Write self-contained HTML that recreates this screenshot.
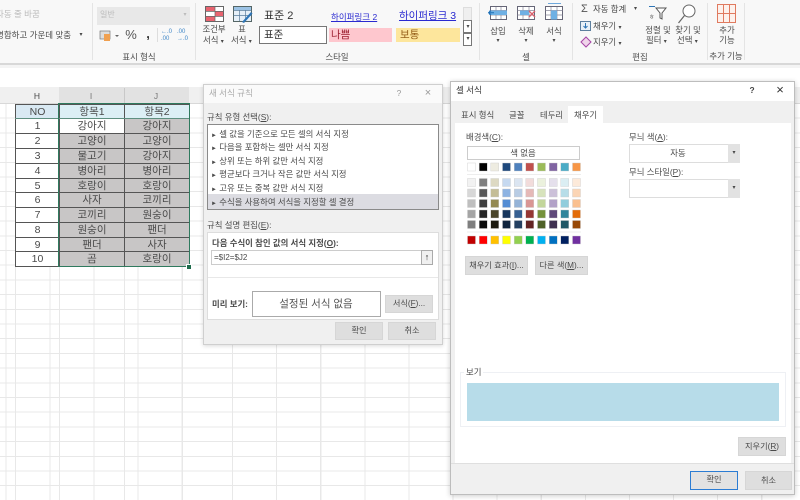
<!DOCTYPE html>
<html lang="ko"><head><meta charset="utf-8"><title>셀 서식</title>
<style>
html,body{margin:0;padding:0;width:800px;height:500px;overflow:hidden;background:#fff}
#w{position:absolute;left:0;top:0;width:800px;height:500px;overflow:hidden;filter:blur(.35px);font-family:"Liberation Sans","Noto Sans CJK KR",sans-serif;font-size:8.4px;color:#4a4a4a}
.a,.t{position:absolute}
.t{white-space:nowrap;line-height:12px;transform:translateY(-6px)}
.c{transform:translate(-50%,-6px)}
.m{font-size:6px}
.btn{position:absolute;background:#dedede;border:1px solid #d6d6d6;box-sizing:border-box;text-align:center;font-size:8.2px;color:#4a4a4a;white-space:nowrap}
u{text-decoration:underline}
table{position:absolute;left:15px;top:104px;border-collapse:collapse;table-layout:fixed;width:174px;font-size:10.5px;color:#4a4a4a}
td{padding:0;text-align:center;border:1px solid #555;line-height:12px;background:#c8c6c6;overflow:hidden}
td:first-child{background:#fff}
tr:first-child td{background:#dceff5;border-bottom:1px solid #5f8f80}
tr:first-child td:first-child{background:#d9e9f3}
</style></head><body><div id="w">

<!-- grid -->
<div class="a" style="left:0;top:104px;width:800px;height:396px;background-image:repeating-linear-gradient(180deg,transparent 0,transparent 13.7px,#e8e8e8 13.7px,#e8e8e8 14.7px),repeating-linear-gradient(90deg,transparent 0,transparent 43px,#e8e8e8 43px,#e8e8e8 44.1px);background-position:0 0,189px 0"></div>
<div class="a" style="left:15px;top:266px;width:1px;height:234px;background:#e8e8e8"></div>
<div class="a" style="left:59px;top:266px;width:1px;height:234px;background:#e8e8e8"></div>
<div class="a" style="left:124px;top:266px;width:1px;height:234px;background:#e8e8e8"></div>

<!-- column headers -->
<div class="a" style="left:0;top:87px;width:800px;height:17px;background:#f0f0f0;border-bottom:1px solid #d8d8d8;box-sizing:border-box"></div>
<div class="a" style="left:59px;top:87px;width:130px;height:17px;background:#e2e2e2;border-bottom:1px solid #b8c8c0;box-sizing:border-box"></div>
<div class="a" style="left:124px;top:88px;width:1px;height:15px;background:#c8c8c8"></div>
<span class="t c" style="left:37px;top:96px;font-size:8.5px">H</span>
<span class="t c" style="left:91px;top:96px;font-size:8.5px;color:#777">I</span>
<span class="t c" style="left:156px;top:96px;font-size:8.5px;color:#777">J</span>

<table>
<colgroup><col style="width:44px"><col style="width:65px"><col style="width:65px"></colgroup>
<tr style="height:14px"><td>NO</td><td>항목1</td><td>항목2</td></tr>
<tr style="height:15px"><td>1</td><td style="background:#fff">강아지</td><td>강아지</td></tr>
<tr style="height:15px"><td>2</td><td>고양이</td><td>고양이</td></tr>
<tr style="height:15px"><td>3</td><td>물고기</td><td>강아지</td></tr>
<tr style="height:15px"><td>4</td><td>병아리</td><td>병아리</td></tr>
<tr style="height:14px"><td>5</td><td>호랑이</td><td>호랑이</td></tr>
<tr style="height:15px"><td>6</td><td>사자</td><td>코끼리</td></tr>
<tr style="height:15px"><td>7</td><td>코끼리</td><td>원숭이</td></tr>
<tr style="height:15px"><td>8</td><td>원숭이</td><td>팬더</td></tr>
<tr style="height:14px"><td>9</td><td>팬더</td><td>사자</td></tr>
<tr style="height:15px"><td>10</td><td>곰</td><td>호랑이</td></tr>
</table>
<div class="a" style="left:58px;top:103px;width:132px;height:164px;border:1.5px solid #2f7a5e;box-sizing:border-box"></div>
<div class="a" style="left:186px;top:264px;width:4px;height:4px;background:#1f6b4c;border:1px solid #fff"></div>

<!-- ribbon -->
<div class="a" style="left:0;top:0;width:800px;height:65px;background:#f8f8f8;border-bottom:2px solid #d8d8d8;box-sizing:border-box"></div>
<div class="a" style="left:0;top:65px;width:800px;height:3px;background:#f4f4f4"></div>
<div class="a" style="left:92px;top:3px;width:1px;height:57px;background:#e4e4e4"></div>
<div class="a" style="left:195px;top:3px;width:1px;height:57px;background:#e4e4e4"></div>
<div class="a" style="left:479px;top:3px;width:1px;height:57px;background:#e4e4e4"></div>
<div class="a" style="left:572px;top:3px;width:1px;height:57px;background:#e4e4e4"></div>
<div class="a" style="left:707px;top:3px;width:1px;height:57px;background:#e4e4e4"></div>
<div class="a" style="left:744px;top:3px;width:1px;height:57px;background:#e4e4e4"></div>

<span class="t" style="left:-4px;top:14px;color:#bbb;font-size:8.5px">자동 줄 바꿈</span>
<span class="t" style="left:-4px;top:35px;font-size:8.5px">병합하고 가운데 맞춤</span>
<span class="t c m" style="left:81px;top:35px">▾</span>
<div class="a" style="left:97px;top:7px;width:93px;height:18px;background:#e8e8e8"></div>
<span class="t" style="left:100px;top:15px;color:#bbb;font-size:8px">일반</span>
<span class="t c m" style="left:185px;top:15px;color:#bbb">▾</span>
<svg class="a" style="left:99px;top:29px" width="95" height="13" viewBox="0 0 95 13"><rect x="1" y="2" width="10" height="8" fill="#ddd" stroke="#777" stroke-width=".7"/><rect x="5" y="5" width="6" height="7" fill="#f0a050"/><path d="M16 6l2 2 2-2z" fill="#666"/></svg>
<span class="t c" style="left:131px;top:35px;font-size:13px;color:#555">%</span>
<span class="t c" style="left:148px;top:34px;font-size:13px;font-weight:bold;color:#333">,</span>
<div class="a" style="left:157px;top:28px;width:1px;height:14px;background:#ddd"></div>
<span class="t" style="left:161px;top:35px;font-size:6px;color:#3d85c6;line-height:7px;width:12px">←.0<br>.00</span>
<span class="t" style="left:177px;top:35px;font-size:6px;color:#3d85c6;line-height:7px;width:12px">.00<br>→.0</span>
<span class="t c" style="left:139px;top:57px">표시 형식</span>

<svg class="a" style="left:205px;top:6px" width="19" height="16" viewBox="0 0 19 16"><rect x=".5" y=".5" width="18" height="15" fill="#fff" stroke="#666"/><rect x="1" y="1" width="9" height="4" fill="#e8636f"/><rect x="10" y="5" width="8" height="5" fill="#e8636f"/><rect x="1" y="10" width="9" height="5" fill="#e8636f"/><path d="M10 1v14M1 5.500h17M1 10.500h17" stroke="#666" stroke-width=".7"/></svg>
<span class="t c" style="left:214px;top:29px">조건부</span>
<span class="t" style="left:203px;top:40px">서식 <span class="m">▾</span></span>
<svg class="a" style="left:233px;top:6px" width="20" height="18" viewBox="0 0 20 18"><rect x=".5" y=".5" width="18" height="15" fill="#e6f0f8" stroke="#566"/><path d="M.5 4.500h18M.5 9.500h18M6.500 1v14M12.500 1v14" stroke="#5a7d9c" stroke-width=".7"/><rect x="1" y="1" width="17" height="3" fill="#9cc3e5"/><path d="M9 16L18 6l1.500 1.500L11 17z" fill="#2e75b6"/></svg>
<span class="t c" style="left:242px;top:29px">표</span>
<span class="t" style="left:231px;top:40px">서식 <span class="m">▾</span></span>

<span class="t" style="left:264px;top:16px;font-size:11px;color:#333">표준 2</span>
<div class="a" style="left:259px;top:26px;width:68px;height:18px;background:#fff;border:1px solid #777;box-sizing:border-box"></div>
<span class="t" style="left:264px;top:35px;font-size:10.5px;color:#333">표준</span>
<span class="t" style="left:331px;top:17px;font-size:8.5px;color:#2a2ad0;text-decoration:underline">하이퍼링크 2</span>
<div class="a" style="left:329px;top:28px;width:63px;height:14px;background:#fec7ce"></div>
<span class="t" style="left:331px;top:35px;font-size:10.5px;color:#9c2030">나쁨</span>
<span class="t" style="left:399px;top:16px;font-size:10.5px;color:#2a2ad0;text-decoration:underline">하이퍼링크 3</span>
<div class="a" style="left:396px;top:28px;width:64px;height:14px;background:#fde69c"></div>
<span class="t" style="left:400px;top:35px;font-size:10.5px;color:#96601a">보통</span>
<div class="a" style="left:463px;top:7px;width:9px;height:14px;background:#efefef;border:1px solid #ddd;box-sizing:border-box"></div>
<div class="a" style="left:463px;top:20px;width:9px;height:13px;background:#fff;border:1px solid #777;box-sizing:border-box"></div>
<div class="a" style="left:463px;top:33px;width:9px;height:13px;background:#fff;border:1px solid #777;box-sizing:border-box"></div>
<span class="t c m" style="left:468px;top:27px">▾</span>
<span class="t c m" style="left:468px;top:39px">▾</span>
<span class="t c" style="left:337px;top:57px">스타일</span>

<svg class="a" style="left:488px;top:5px" width="20" height="16" viewBox="0 0 20 16"><rect x="2.500" y="1.500" width="16" height="13" fill="#fff" stroke="#667"/><path d="M2.500 5.500h16M2.500 10h16M8 2v12M13 2v12" stroke="#889" stroke-width=".7"/><rect x="1" y="5.500" width="18" height="4.500" fill="#6fb0e4"/><path d="M6 7.700H1M3 5.700l-2.500 2 2.500 2" stroke="#1f6fb5" fill="none"/></svg>
<span class="t c" style="left:498px;top:31px">삽입</span>
<span class="t c m" style="left:498px;top:41px">▾</span>
<svg class="a" style="left:517px;top:5px" width="20" height="16" viewBox="0 0 20 16"><rect x=".5" y="1.500" width="17" height="13" fill="#fff" stroke="#667"/><path d="M.5 5.500h17M.5 10h17M6 2v12M12 2v12" stroke="#889" stroke-width=".7"/><rect x="3" y="5.500" width="9" height="4.500" fill="#6fb0e4"/><path d="M12 6l6 6M18 6l-6 6" stroke="#d9606c" stroke-width="1.300"/></svg>
<span class="t c" style="left:526px;top:31px">삭제</span>
<span class="t c m" style="left:526px;top:41px">▾</span>
<svg class="a" style="left:545px;top:3px" width="19" height="18" viewBox="0 0 19 18"><path d="M3 .500h13" stroke="#6fa8dc"/><rect x=".5" y="3.500" width="17" height="13" fill="#fff" stroke="#667"/><path d="M.5 7.500h17M.5 12h17M6 4v12M12 4v12" stroke="#889" stroke-width=".7"/><rect x="6" y="7.500" width="6" height="9" fill="#6fb0e4"/></svg>
<span class="t c" style="left:554px;top:31px">서식</span>
<span class="t c m" style="left:554px;top:41px">▾</span>
<span class="t c" style="left:526px;top:57px">셀</span>

<span class="t" style="left:581px;top:9px;font-size:11px;color:#555">Σ</span>
<span class="t" style="left:593px;top:9px">자동 합계</span>
<span class="t m" style="left:634px;top:9px">▾</span>
<svg class="a" style="left:580px;top:20px" width="12" height="12" viewBox="0 0 12 12"><rect x=".5" y="1.500" width="10" height="9" fill="#e8f1f8" stroke="#5d7f9e"/><path d="M5.500 3v5M3.500 6l2 2 2-2" stroke="#2e75b6" fill="none"/></svg>
<span class="t" style="left:593px;top:26px">채우기 <span class="m">▾</span></span>
<svg class="a" style="left:580px;top:36px" width="12" height="12" viewBox="0 0 12 12"><path d="M1 6l5-5 5 5-5 5z" fill="#f0d5ea" stroke="#a646a6"/></svg>
<span class="t" style="left:593px;top:42px">지우기 <span class="m">▾</span></span>
<svg class="a" style="left:648px;top:5px" width="20" height="17" viewBox="0 0 20 17"><path d="M1 1.500h6" stroke="#2e75b6"/><path d="M8 3h10l-4 5v6l-2-1V8z" fill="#fff" stroke="#555"/></svg>
<span class="t m" style="left:649px;top:18px">ㅎ</span>
<span class="t c" style="left:658px;top:30px">정렬 및</span>
<span class="t" style="left:646px;top:40px">필터 <span class="m">▾</span></span>
<svg class="a" style="left:677px;top:3px" width="21" height="21" viewBox="0 0 21 21"><circle cx="12" cy="8" r="6" fill="#fff" stroke="#666"/><path d="M7.500 12.500L1.500 20" stroke="#666" stroke-width="1.200"/></svg>
<span class="t c" style="left:688px;top:30px">찾기 및</span>
<span class="t" style="left:677px;top:40px">선택 <span class="m">▾</span></span>
<span class="t c" style="left:640px;top:57px">편집</span>
<svg class="a" style="left:717px;top:4px" width="19" height="19" viewBox="0 0 19 19"><rect x=".5" y=".5" width="18" height="18" fill="#fdf1ec" stroke="#e07a5f"/><path d="M6.500 1v17M12.500 1v17M1 9.500h17" stroke="#e07a5f"/></svg>
<span class="t c" style="left:727px;top:30px">추가</span>
<span class="t c" style="left:727px;top:40px">기능</span>
<span class="t c" style="left:726px;top:56px">추가 기능</span>

<!-- Dialog 1 -->
<div class="a" style="left:203px;top:84px;width:240px;height:261px;background:#f0f0f0;border:1px solid #cfcfcf;box-sizing:border-box;box-shadow:0 1px 4px rgba(0,0,0,.15)"></div>
<div class="a" style="left:204px;top:85px;width:238px;height:18px;background:#fafafa"></div>
<span class="t" style="left:209px;top:93px;color:#aaa;font-size:8.5px">새 서식 규칙</span>
<span class="t c" style="left:399px;top:93px;color:#999">?</span>
<span class="t c" style="left:428px;top:93px;color:#999;font-size:11px">×</span>
<span class="t" style="left:207px;top:117px">규칙 유형 선택(<u>S</u>):</span>
<div class="a" style="left:207px;top:124px;width:232px;height:86px;background:#fff;border:1px solid #8a8a8a;box-sizing:border-box"></div>
<div class="a" style="left:208px;top:194px;width:230px;height:15px;background:#dcdce2"></div>
<span class="t" style="left:211px;top:134px"><span class="m">►</span> 셀 값을 기준으로 모든 셀의 서식 지정</span>
<span class="t" style="left:211px;top:147px"><span class="m">►</span> 다음을 포함하는 셀만 서식 지정</span>
<span class="t" style="left:211px;top:161px"><span class="m">►</span> 상위 또는 하위 값만 서식 지정</span>
<span class="t" style="left:211px;top:174px"><span class="m">►</span> 평균보다 크거나 작은 값만 서식 지정</span>
<span class="t" style="left:211px;top:188px"><span class="m">►</span> 고유 또는 중복 값만 서식 지정</span>
<span class="t" style="left:211px;top:202px"><span class="m">►</span> 수식을 사용하여 서식을 지정할 셀 결정</span>
<span class="t" style="left:207px;top:225px">규칙 설명 편집(<u>E</u>):</span>
<div class="a" style="left:207px;top:232px;width:232px;height:88px;background:#fff;border:1px solid #ddd;box-sizing:border-box"></div>
<span class="t" style="left:212px;top:243px;font-weight:bold">다음 수식이 참인 값의 서식 지정(<u>O</u>):</span>
<div class="a" style="left:211px;top:250px;width:222px;height:15px;background:#fff;border:1px solid #ccc;box-sizing:border-box"></div>
<span class="t" style="left:214px;top:258px;font-size:8px">=$I2=$J2</span>
<div class="a" style="left:421px;top:250px;width:12px;height:15px;background:#f0f0f0;border:1px solid #aaa;box-sizing:border-box"></div>
<span class="t c" style="left:427px;top:257px;font-size:9px;color:#222;font-weight:bold">↑</span>
<div class="a" style="left:208px;top:277px;width:230px;height:1px;background:#e8e8e8"></div>
<span class="t" style="left:212px;top:304px;font-weight:bold">미리 보기:</span>
<div class="a" style="left:252px;top:291px;width:129px;height:26px;background:#fff;border:1px solid #aaa;box-sizing:border-box"></div>
<span class="t c" style="left:316px;top:304px;font-size:10.5px;color:#555">설정된 서식 없음</span>
<div class="btn" style="left:385px;top:295px;width:48px;height:18px;line-height:16px">서식(<u>F</u>)...</div>
<div class="btn" style="left:335px;top:322px;width:48px;height:18px;line-height:16px">확인</div>
<div class="btn" style="left:388px;top:322px;width:48px;height:18px;line-height:16px">취소</div>

<!-- Dialog 2 -->
<div class="a" style="left:450px;top:81px;width:345px;height:414px;background:#f0f0f0;border:1px solid #bdbdbd;box-sizing:border-box;box-shadow:0 1px 5px rgba(0,0,0,.2)"></div>
<div class="a" style="left:451px;top:82px;width:343px;height:19px;background:#fff"></div>
<span class="t" style="left:456px;top:90px;font-size:8.5px;color:#333">셀 서식</span>
<span class="t c" style="left:752px;top:90px;font-weight:bold;color:#444">?</span>
<span class="t c" style="left:780px;top:90px;font-size:13px;color:#333">×</span>
<span class="t" style="left:461px;top:115px">표시 형식</span>
<span class="t" style="left:509px;top:115px">글꼴</span>
<span class="t" style="left:540px;top:115px">테두리</span>
<div class="a" style="left:455px;top:123px;width:336px;height:340px;background:#fff"></div>
<div class="a" style="left:568px;top:106px;width:35px;height:18px;background:#fff"></div>
<span class="t" style="left:574px;top:115px">채우기</span>
<span class="t" style="left:466px;top:137px">배경색(<u>C</u>):</span>
<div class="a" style="left:467px;top:146px;width:113px;height:14px;background:#fff;border:1px solid #ccc;box-sizing:border-box"></div>
<span class="t c" style="left:523px;top:153px">색 없음</span>
<svg class="a" style="left:467px;top:162px" width="120" height="84" viewBox="467 162 120 84">
<g stroke="#ccc" stroke-width=".4">
<rect x="467.500" y="163" width="8" height="8" fill="#fff"/><rect x="479.200" y="163" width="8" height="8" fill="#000"/><rect x="490.800" y="163" width="8" height="8" fill="#eeece1"/><rect x="502.500" y="163" width="8" height="8" fill="#1f497d"/><rect x="514.200" y="163" width="8" height="8" fill="#4f81bd"/><rect x="525.800" y="163" width="8" height="8" fill="#c0504d"/><rect x="537.500" y="163" width="8" height="8" fill="#9bbb59"/><rect x="549.200" y="163" width="8" height="8" fill="#8064a2"/><rect x="560.800" y="163" width="8" height="8" fill="#4bacc6"/><rect x="572.500" y="163" width="8" height="8" fill="#f79646"/>
<rect x="467.500" y="178.500" width="8" height="8" fill="#f2f2f2"/><rect x="479.200" y="178.500" width="8" height="8" fill="#7f7f7f"/><rect x="490.800" y="178.500" width="8" height="8" fill="#ddd9c3"/><rect x="502.500" y="178.500" width="8" height="8" fill="#c6d9f0"/><rect x="514.200" y="178.500" width="8" height="8" fill="#dbe5f1"/><rect x="525.800" y="178.500" width="8" height="8" fill="#f2dcdb"/><rect x="537.500" y="178.500" width="8" height="8" fill="#ebf1dd"/><rect x="549.200" y="178.500" width="8" height="8" fill="#e5e0ec"/><rect x="560.800" y="178.500" width="8" height="8" fill="#dbeef3"/><rect x="572.500" y="178.500" width="8" height="8" fill="#fdeada"/>
<rect x="467.500" y="189" width="8" height="8" fill="#d8d8d8"/><rect x="479.200" y="189" width="8" height="8" fill="#595959"/><rect x="490.800" y="189" width="8" height="8" fill="#c4bd97"/><rect x="502.500" y="189" width="8" height="8" fill="#8db3e2"/><rect x="514.200" y="189" width="8" height="8" fill="#b8cce4"/><rect x="525.800" y="189" width="8" height="8" fill="#e5b9b7"/><rect x="537.500" y="189" width="8" height="8" fill="#d7e3bc"/><rect x="549.200" y="189" width="8" height="8" fill="#ccc1d9"/><rect x="560.800" y="189" width="8" height="8" fill="#b7dde8"/><rect x="572.500" y="189" width="8" height="8" fill="#fbd5b5"/>
<rect x="467.500" y="199.500" width="8" height="8" fill="#bfbfbf"/><rect x="479.200" y="199.500" width="8" height="8" fill="#3f3f3f"/><rect x="490.800" y="199.500" width="8" height="8" fill="#938953"/><rect x="502.500" y="199.500" width="8" height="8" fill="#548dd4"/><rect x="514.200" y="199.500" width="8" height="8" fill="#95b3d7"/><rect x="525.800" y="199.500" width="8" height="8" fill="#d99694"/><rect x="537.500" y="199.500" width="8" height="8" fill="#c3d69b"/><rect x="549.200" y="199.500" width="8" height="8" fill="#b2a2c7"/><rect x="560.800" y="199.500" width="8" height="8" fill="#92cddc"/><rect x="572.500" y="199.500" width="8" height="8" fill="#fac08f"/>
<rect x="467.500" y="210" width="8" height="8" fill="#a5a5a5"/><rect x="479.200" y="210" width="8" height="8" fill="#262626"/><rect x="490.800" y="210" width="8" height="8" fill="#494429"/><rect x="502.500" y="210" width="8" height="8" fill="#17365d"/><rect x="514.200" y="210" width="8" height="8" fill="#366092"/><rect x="525.800" y="210" width="8" height="8" fill="#953734"/><rect x="537.500" y="210" width="8" height="8" fill="#76923c"/><rect x="549.200" y="210" width="8" height="8" fill="#5f497a"/><rect x="560.800" y="210" width="8" height="8" fill="#31859b"/><rect x="572.500" y="210" width="8" height="8" fill="#e36c09"/>
<rect x="467.500" y="220.500" width="8" height="8" fill="#7f7f7f"/><rect x="479.200" y="220.500" width="8" height="8" fill="#0c0c0c"/><rect x="490.800" y="220.500" width="8" height="8" fill="#1d1b10"/><rect x="502.500" y="220.500" width="8" height="8" fill="#0f243e"/><rect x="514.200" y="220.500" width="8" height="8" fill="#244061"/><rect x="525.800" y="220.500" width="8" height="8" fill="#632423"/><rect x="537.500" y="220.500" width="8" height="8" fill="#4f6128"/><rect x="549.200" y="220.500" width="8" height="8" fill="#3f3151"/><rect x="560.800" y="220.500" width="8" height="8" fill="#205867"/><rect x="572.500" y="220.500" width="8" height="8" fill="#974806"/>
<rect x="467.500" y="236" width="8" height="8" fill="#c00000"/><rect x="479.200" y="236" width="8" height="8" fill="#ff0000"/><rect x="490.800" y="236" width="8" height="8" fill="#ffc000"/><rect x="502.500" y="236" width="8" height="8" fill="#ffff00"/><rect x="514.200" y="236" width="8" height="8" fill="#92d050"/><rect x="525.800" y="236" width="8" height="8" fill="#00b050"/><rect x="537.500" y="236" width="8" height="8" fill="#00b0f0"/><rect x="549.200" y="236" width="8" height="8" fill="#0070c0"/><rect x="560.800" y="236" width="8" height="8" fill="#002060"/><rect x="572.500" y="236" width="8" height="8" fill="#7030a0"/>
</g>
<path d="M467 174.500h114M467 232h114" stroke="#e8e8e8" stroke-width=".7"/>
</svg>
<div class="btn" style="left:465px;top:256px;width:63px;height:19px;line-height:17px">채우기 효과(<u>I</u>)...</div>
<div class="btn" style="left:535px;top:256px;width:53px;height:19px;line-height:17px">다른 색(<u>M</u>)...</div>
<span class="t" style="left:629px;top:137px">무늬 색(<u>A</u>):</span>
<div class="a" style="left:629px;top:144px;width:111px;height:19px;background:#fff;border:1px solid #ddd;box-sizing:border-box"></div>
<div class="a" style="left:728px;top:144px;width:12px;height:19px;background:#e2e2e2"></div>
<span class="t c" style="left:678px;top:153px">자동</span>
<span class="t c m" style="left:734px;top:153px">▾</span>
<span class="t" style="left:629px;top:172px">무늬 스타일(<u>P</u>):</span>
<div class="a" style="left:629px;top:179px;width:111px;height:19px;background:#fff;border:1px solid #ddd;box-sizing:border-box"></div>
<div class="a" style="left:728px;top:179px;width:12px;height:19px;background:#e2e2e2"></div>
<span class="t c m" style="left:734px;top:188px">▾</span>
<div class="a" style="left:460px;top:372px;width:326px;height:55px;border:1px solid #eef0f4;box-sizing:border-box"></div>
<span class="t" style="left:464px;top:372px;background:#fff;padding:0 2px">보기</span>
<div class="a" style="left:467px;top:383px;width:312px;height:38px;background:#b7dce9"></div>
<div class="btn" style="left:738px;top:437px;width:48px;height:19px;line-height:17px">지우기(<u>R</u>)</div>
<div class="a" style="left:451px;top:463px;width:343px;height:1px;background:#dfdfdf"></div>
<div class="btn" style="left:690px;top:471px;width:48px;height:19px;line-height:16px;border:1.5px solid #2b7cd3;background:#e2e2e2">확인</div>
<div class="btn" style="left:745px;top:471px;width:47px;height:19px;line-height:17px">취소</div>
</div></body></html>
